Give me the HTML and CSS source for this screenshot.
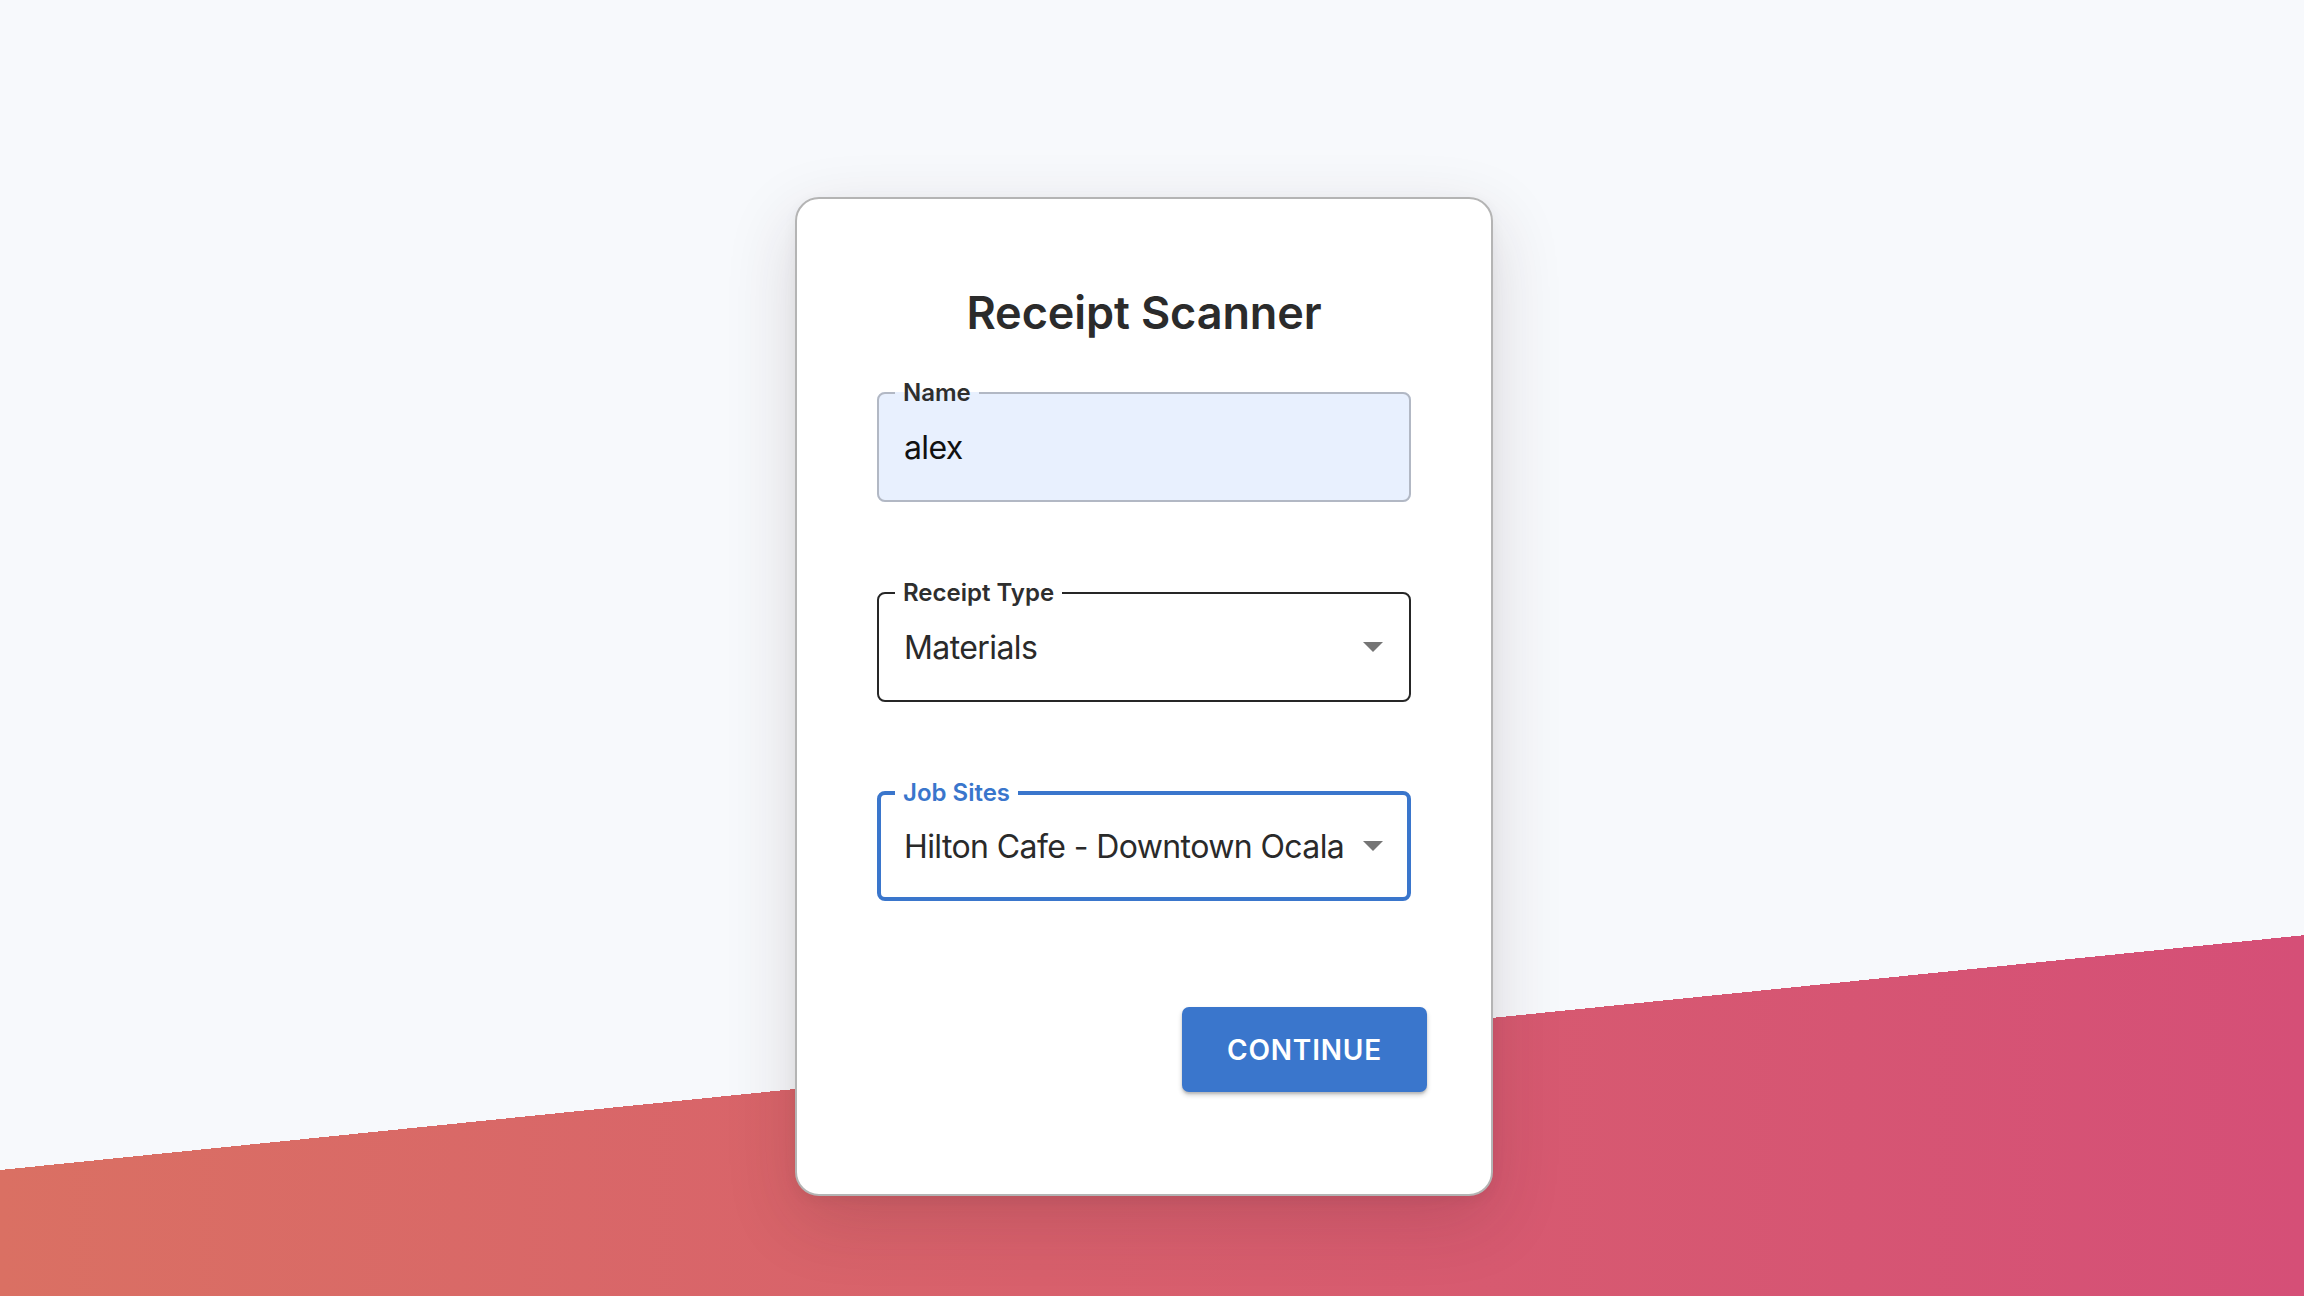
FILE: index.html
```html
<!DOCTYPE html>
<html lang="en">
<head>
<meta charset="utf-8">
<title>Receipt Scanner</title>
<link rel="stylesheet" href="styles.css">
</head>
<body>
<div class="page">
  <main class="card">
    <h1 class="title">Receipt Scanner</h1>
    <fieldset class="field field-filled">
      <legend class="legend">Name</legend>
      <div class="control"><span class="value value-input">alex</span></div>
    </fieldset>
    <fieldset class="field field-select">
      <legend class="legend">Receipt Type</legend>
      <div class="control">
        <span class="value">Materials</span>
        <svg class="arrow" width="20" height="10" viewBox="0 0 20 10"><path d="M0 0 L20 0 L10 10 Z" fill="#757575"/></svg>
      </div>
    </fieldset>
    <fieldset class="field field-select field-focused">
      <legend class="legend">Job Sites</legend>
      <div class="control">
        <span class="value">Hilton Cafe - Downtown Ocala</span>
        <svg class="arrow" width="20" height="10" viewBox="0 0 20 10"><path d="M0 0 L20 0 L10 10 Z" fill="#757575"/></svg>
      </div>
    </fieldset>
    <div class="actions">
      <button class="btn" type="button">CONTINUE</button>
    </div>
  </main>
</div>
</body>
</html>
```

FILE: styles.css
```css
html, body {
  margin: 0;
  padding: 0;
}

body {
  font-family: Inter, "Noto Sans", "Liberation Sans", sans-serif;
  color: #2a2a2a;
}

.page {
  min-height: 100vh;
  box-sizing: border-box;
  padding: 197px 0 0 795px;
  background:
    linear-gradient(174.18deg, #f7f9fc 1164px, rgba(247, 249, 252, 0) 1164px),
    linear-gradient(to right, #da7063 0%, #d8606c 45%, #d54f77 100%);
}

.card {
  width: 698px;
  height: 999px;
  box-sizing: border-box;
  background: #ffffff;
  border: 2px solid #b4b4b4;
  border-radius: 24px;
  padding: 91px 80px 0 80px;
  box-shadow: 0 24px 70px rgba(60, 30, 40, 0.16), 0 4px 14px rgba(0, 0, 0, 0.05);
  display: flex;
  flex-direction: column;
}

.title {
  margin: 0 0 46px 0;
  font-size: 45px;
  line-height: 45px;
  font-weight: 600;
  text-align: center;
  color: #2b2b2b;
  letter-spacing: -0.1px;
}

.field {
  margin: 0 0 79px 0;
  padding: 0;
  min-width: 0;
  border: 2px solid #262626;
  border-radius: 8px;
  height: 121px;
  box-sizing: border-box;
}

.field-filled {
  background: #e8f0fe;
  border-color: #b2b8c4;
}

.field-focused {
  border: 4px solid #3a76cc;
  margin-bottom: 0;
  height: 120px;
}

.legend {
  margin-left: 16px;
  padding: 0 8px;
  font-size: 24px;
  line-height: 24px;
  font-weight: 600;
  color: #2e2e2e;
}

.field-focused .legend {
  color: #3a76cc;
  margin-left: 14px;
}

.control {
  display: flex;
  align-items: center;
  justify-content: space-between;
  height: 84px;
  padding: 0 26px 0 25px;
}

.field-focused .control {
  padding: 0 24px 0 23px;
  height: 82px;
}

.value {
  font-size: 32px;
  font-weight: 400;
  color: #2a2a2a;
  letter-spacing: -0.6px;
  white-space: nowrap;
}

.value-input {
  color: #111111;
}

.arrow {
  flex: none;
}

.actions {
  display: flex;
  justify-content: flex-end;
  margin-top: 106px;
  margin-right: -16px;
}

.btn {
  width: 245px;
  height: 85px;
  border: none;
  border-radius: 7px;
  background: #3a76cc;
  color: #ffffff;
  font-family: Inter, "Noto Sans", "Liberation Sans", sans-serif;
  font-size: 28px;
  font-weight: 600;
  letter-spacing: 0.8px;
  box-shadow: 0 3px 5px rgba(0, 0, 0, 0.2), 0 2px 2px rgba(0, 0, 0, 0.12);
  cursor: pointer;
}
```
